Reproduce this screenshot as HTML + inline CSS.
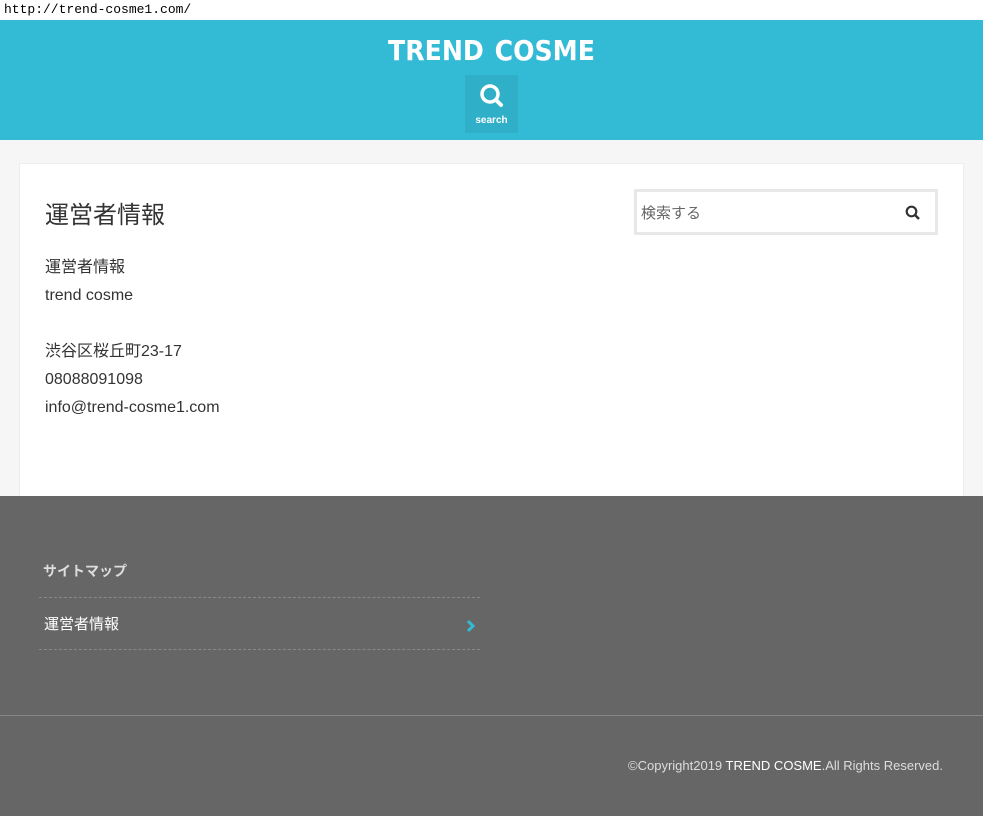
<!DOCTYPE html>
<html><head><meta charset="utf-8"><style>
*{margin:0;padding:0;box-sizing:border-box}
body{width:983px;height:816px;overflow:hidden;background:#f6f6f6;font-family:"Liberation Sans","Noto Sans CJK JP",sans-serif;position:relative;color:#333}
.url{position:absolute;left:0;top:0;width:983px;height:20px;background:#fff;font-family:"Liberation Mono",monospace;font-size:13px;line-height:20px;padding-left:4px;color:#000}
header{position:absolute;top:20px;left:0;width:983px;height:120px;background:#33bad4}
.logo{position:absolute;left:0;width:983px;top:14px;text-align:center;color:#fff;font-weight:bold;font-size:28px;font-family:"DejaVu Sans Condensed","Liberation Sans",sans-serif;word-spacing:2px}
.sbtn{position:absolute;left:465px;top:55px;width:53px;height:58px;background:#2fb0c8;color:#fff;text-align:center}
.sbtn span{position:absolute;left:0;width:53px;top:40px;font-size:10px;font-weight:bold}
.card{position:absolute;left:19px;top:163px;width:945px;height:340px;background:#fff;border:1px solid #eee}
h1{position:absolute;left:45px;top:195px;font-size:24px;font-weight:normal;color:#333}
.txt{position:absolute;left:45px;top:254px;font-size:16px;line-height:28px;color:#333}
.search{position:absolute;left:634px;top:189px;width:304px;height:46px;border:3px solid #e8e8e8;background:#fff;font-size:15px;color:#666;padding:10px 0 0 4px}
footer{position:absolute;left:0;top:496px;width:983px;height:320px;background:#666}
.fh{position:absolute;left:43px;top:65px;color:#ddd;font-weight:bold;font-size:14px}
.fl{position:absolute;left:39px;top:101px;width:441px;height:53px;border-top:1px dashed #888;border-bottom:1px dashed #888;color:#fff;font-size:15px;padding:15px 0 0 5px}
.fl svg{position:absolute;right:4px;top:21px}
.hr{position:absolute;left:0;top:219px;width:983px;border-top:1px solid #888}
.copy{position:absolute;right:40px;top:262px;color:#ddd;font-size:13px}
.copy span{color:#fff}
</style></head><body>
<div class="url">http://trend-cosme1.com/</div>
<header><div class="logo">TREND COSME</div>
<div class="sbtn"><svg width="53" height="40" viewBox="0 0 53 40"><circle cx="25" cy="19" r="8" fill="none" stroke="#fff" stroke-width="3.5"/><line x1="31" y1="25" x2="36" y2="30" stroke="#fff" stroke-width="4" stroke-linecap="round"/></svg><span>search</span></div></header>
<div class="card"></div>
<h1>運営者情報</h1>
<div class="txt">運営者情報<br>trend cosme<br><br>渋谷区桜丘町23-17<br>08088091098<br>info@trend-cosme1.com</div>
<div class="search">検索する<svg style="position:absolute;right:14px;top:13px" width="16" height="16" viewBox="0 0 16 16"><circle cx="6.5" cy="6.5" r="4.8" fill="none" stroke="#333" stroke-width="2.2"/><line x1="10" y1="10" x2="14" y2="14" stroke="#333" stroke-width="2.5"/></svg></div>
<footer><div class="fh">サイトマップ</div><div class="fl">運営者情報<svg width="10" height="14" viewBox="0 0 10 14"><path d="M2 2l5 5-5 5" fill="none" stroke="#33bad4" stroke-width="3"/></svg></div><div class="hr"></div>
<div class="copy">©Copyright2019 <span>TREND COSME</span>.All Rights Reserved.</div></footer>
</body></html>
